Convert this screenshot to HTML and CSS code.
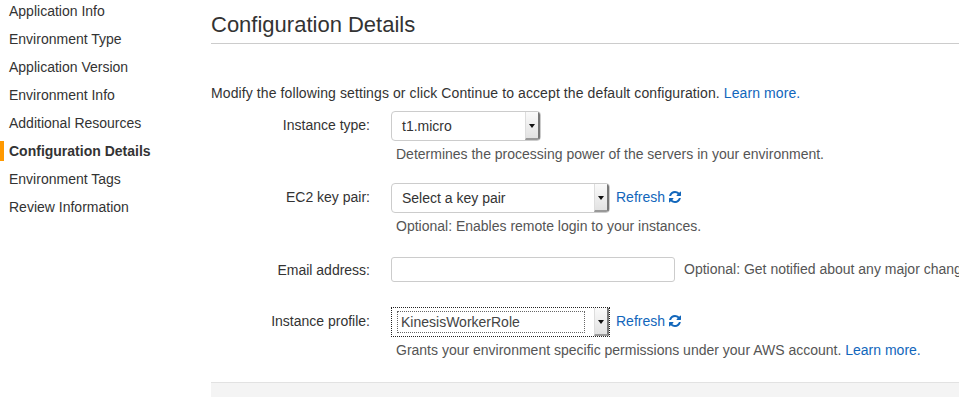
FILE: index.html
```html
<!DOCTYPE html>
<html lang="en">
<head>
    <meta charset="UTF-8">
    <title>Configuration Details</title>
    <link rel="stylesheet" href="styles.css">
</head>
<body>
    <ul class="steps">
        <li>Application Info</li>
        <li>Environment Type</li>
        <li>Application Version</li>
        <li>Environment Info</li>
        <li>Additional Resources</li>
        <li class="active">Configuration Details</li>
        <li>Environment Tags</li>
        <li>Review Information</li>
    </ul>

    <div class="main">
        <h2>Configuration Details</h2>
        <p class="intro">Modify the following settings or click Continue to accept the default configuration. <a href="#">Learn more.</a></p>

        <div class="form">
            <!-- Instance type -->
            <div class="row">
                <label>Instance type:</label>
                <div class="field">
                    <div class="control">
                        <div class="select small"><span class="value">t1.micro</span><span class="arrow"></span></div>
                    </div>
                    <div class="help">Determines the processing power of the servers in your environment.</div>
                </div>
            </div>

            <!-- Key pair -->
            <div class="row">
                <label>EC2 key pair:</label>
                <div class="field">
                    <div class="control">
                        <div class="select"><span class="value">Select a key pair</span><span class="arrow"></span></div>
                        <a href="#" class="refresh">Refresh
                            <svg viewBox="0 0 1536 1536" width="12" height="12"><path fill="currentColor" d="M1511 928q0 5-1 7-64 268-268 434.5T764 1536q-146 0-282.5-55T238 1324l-129 129q-19 19-45 19t-45-19-19-45V960q0-26 19-45t45-19h448q26 0 45 19t19 45-19 45l-137 137q71 66 161 102t187 36q134 0 250-65t186-179q11-17 53-117 8-23 30-23h192q13 0 22.5 9.5t9.5 22.5zm25-800v448q0 26-19 45t-45 19h-448q-26 0-45-19t-19-45 19-45l138-138Q969 256 768 256q-134 0-250 65T332 500q-11 17-53 117-8 23-30 23H50q-13 0-22.5-9.5T18 608v-7q65-268 270-434.5T768 0q146 0 284 55.5T1297 212l130-129q19-19 45-19t45 19 19 45z"/></svg>
                        </a>
                    </div>
                    <div class="help">Optional: Enables remote login to your instances.</div>
                </div>
            </div>

            <!-- Email -->
            <div class="row">
                <label>Email address:</label>
                <div class="field">
                    <div class="control">
                        <input type="text" class="text-input">
                        <span class="inline-help">Optional: Get notified about any major changes to your environment.</span>
                    </div>
                </div>
            </div>

            <!-- Instance profile -->
            <div class="row">
                <label>Instance profile:</label>
                <div class="field">
                    <div class="control">
                        <div class="select focused"><span class="value">KinesisWorkerRole</span><span class="arrow"></span></div>
                        <a href="#" class="refresh">Refresh
                            <svg viewBox="0 0 1536 1536" width="12" height="12"><path fill="currentColor" d="M1511 928q0 5-1 7-64 268-268 434.5T764 1536q-146 0-282.5-55T238 1324l-129 129q-19 19-45 19t-45-19-19-45V960q0-26 19-45t45-19h448q26 0 45 19t19 45-19 45l-137 137q71 66 161 102t187 36q134 0 250-65t186-179q11-17 53-117 8-23 30-23h192q13 0 22.5 9.5t9.5 22.5zm25-800v448q0 26-19 45t-45 19h-448q-26 0-45-19t-19-45 19-45l138-138Q969 256 768 256q-134 0-250 65T332 500q-11 17-53 117-8 23-30 23H50q-13 0-22.5-9.5T18 608v-7q65-268 270-434.5T768 0q146 0 284 55.5T1297 212l130-129q19-19 45-19t45 19 19 45z"/></svg>
                        </a>
                    </div>
                    <div class="help">Grants your environment specific permissions under your AWS account. <a href="#">Learn more.</a></div>
                </div>
            </div>
        </div>

        <div class="footer"></div>
    </div>
</body>
</html>
```
FILE: styles.css
```css
/* Basic Styling */
html, body {
    overflow: hidden;
}

body {
    font-family: "Liberation Sans", Arial, sans-serif;
    font-size: 14px;
    color: #333;
    background: #fff;
    margin: 0;
    height: 397px;
    display: flex;
    align-items: flex-start;
}

a {
    color: #1166bb;
    text-decoration: none;
}

/* Wizard steps */
.steps {
    list-style: none;
    margin: -3px 0 0 0;
    padding: 0;
    width: 211px;
    flex-shrink: 0;
}

.steps li {
    line-height: 20px;
    padding-left: 9px;
    margin: 4px 0 8px 0;
    white-space: nowrap;
}

.steps li.active {
    font-weight: bold;
    border-left: 4px solid #f90;
    padding-left: 5px;
}

/* Main panel */
.main {
    flex: 1;
    min-width: 0;
    overflow: hidden;
}

h2 {
    font-size: 22px;
    font-weight: normal;
    color: #333;
    margin: 12px 0 0 0;
    padding-bottom: 5px;
    line-height: 26px;
    border-bottom: 1px solid #ccc;
}

.intro {
    margin: 40px 0 0 0;
    line-height: 18px;
    letter-spacing: 0.1px;
    white-space: nowrap;
}

/* Form rows */
.form {
    margin-top: 9px;
}

.row {
    display: grid;
    grid-template-columns: 159px 1fr;
    column-gap: 21px;
    align-items: start;
}

.row label {
    text-align: right;
    line-height: 29px;
}

.row:nth-child(1) { height: 72px; }
.row:nth-child(2) { height: 72px; }
.row:nth-child(3) { height: 52px; }

.row:nth-child(3) label {
    line-height: 26px;
    padding-top: 2px;
}

.control {
    display: flex;
    align-items: center;
    gap: 6px;
    white-space: nowrap;
}

.help {
    margin: 4px 0 0 5px;
    color: #555;
    line-height: 18px;
    white-space: nowrap;
}

/* Fake select boxes */
.select {
    width: 219px;
    height: 30px;
    box-sizing: border-box;
    border: 1px solid #ccc;
    border-radius: 4px;
    display: flex;
    align-items: stretch;
    background: #fff;
    overflow: hidden;
}

.select.small {
    width: 150px;
}

.select .value {
    flex: 1;
    padding-left: 10px;
    line-height: 28px;
    color: #333;
}

.select .arrow {
    width: 12px;
    background: linear-gradient(#fafafa, #e2e2e2);
    border-left: 1px solid #ddd;
    border-right: 2px solid #777;
    border-bottom: 2px solid #999;
    position: relative;
}

.select .arrow::after {
    content: "";
    position: absolute;
    left: 3px;
    top: 12px;
    border-left: 3px solid transparent;
    border-right: 3px solid transparent;
    border-top: 4px solid #111;
}

.select.focused {
    border: 1px dotted #222;
    border-radius: 0;
    padding: 3px 0 3px 5px;
}

.select.focused .value {
    border: 1px dotted #666;
    line-height: 20px;
    padding-left: 3px;
    color: #444;
}

.select.focused .arrow {
    margin: -3px 0 -3px 9px;
}

.refresh {
    display: inline-flex;
    align-items: center;
    gap: 4px;
    margin-top: -2px;
}

.text-input {
    width: 284px;
    height: 25px;
    box-sizing: border-box;
    border: 1px solid #ccc;
    border-radius: 3px;
    margin: 2px 0 0 0;
    font-size: 14px;
}

.inline-help {
    color: #555;
    margin-left: 3px;
}

.footer {
    margin-top: 23px;
    height: 15px;
    background: #f4f4f4;
    border-top: 1px solid #e2e2e2;
}
```
